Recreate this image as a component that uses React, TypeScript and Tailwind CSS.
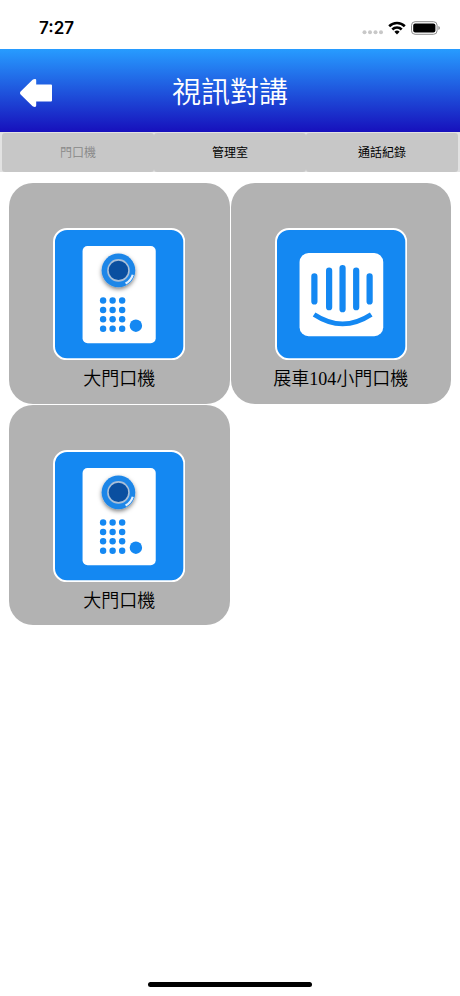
import { useState } from 'react'

const tabs = ['門口機', '管理室', '通話紀錄']

const stations = [
    { id: 1, name: '大門口機', kind: 'gate' },
    { id: 2, name: '展車104小門口機', kind: 'small' },
    { id: 3, name: '大門口機', kind: 'gate' },
]

function GateIcon() {
    return (
        <svg viewBox="0 0 132 132" className="w-full" aria-hidden="true">
            <defs>
                <filter id="lensShadow" x="-30%" y="-30%" width="160%" height="170%">
                    <feDropShadow dx="0" dy="2" stdDeviation="2" floodColor="#000" floodOpacity="0.5" />
                </filter>
            </defs>
            <rect x="1" y="1" width="130" height="130" rx="13" fill="#1488f2" stroke="#fff" strokeWidth="2" />
            <rect x="29.5" y="18" width="73" height="97" rx="5" fill="#fff" />
            <circle cx="65.3" cy="42.3" r="16.8" fill="#1d86e8" filter="url(#lensShadow)" />
            <circle cx="65.3" cy="42.3" r="10.5" fill="#0a4fa0" stroke="#a9bfd8" strokeWidth="1.6" />
            <path d="M79.6 46.6A15 15 0 0 1 72.4 55.4" fill="none" stroke="#e4f1ff" strokeWidth="2.2" />
            {[72.4, 81.8, 91.1, 100.5].map((y) =>
                [50, 59.5, 69].map((x) => <circle key={`${x}-${y}`} cx={x} cy={y} r="3.2" fill="#1488f2" />)
            )}
            <circle cx="82.7" cy="97.5" r="6.2" fill="#1488f2" />
        </svg>
    )
}

function SmallGateIcon() {
    return (
        <svg viewBox="0 0 132 132" className="w-full" aria-hidden="true">
            <rect x="1" y="1" width="130" height="130" rx="13" fill="#1488f2" stroke="#fff" strokeWidth="2" />
            <rect x="24.5" y="25" width="83.5" height="83" rx="9" fill="#fff" />
            <g fill="none" stroke="#1488f2" strokeWidth="6.2" strokeLinecap="round">
                <path d="M39.3 48.3V73.3M54 42.4V79M67.4 40V81M81 42.4V79M94.4 48.3V73.3" />
                <path d="M39 86.3Q67.4 105 96 86.3" strokeWidth="4.8" strokeLinecap="butt" />
            </g>
        </svg>
    )
}

function StatusBar() {
    return (
        <div className="flex h-[49px] items-center justify-between pt-[6px] pr-5 pl-[39px]">
            <span className="font-[Inter,sans-serif] text-[17px] leading-5 font-semibold">7:27</span>
            <div className="flex items-center gap-1">
                <svg viewBox="0 0 22 14" className="h-[14px] w-[22px]" fill="#c8c8c8" aria-hidden="true">
                    <circle cx="2.5" cy="11.3" r="2" />
                    <circle cx="8" cy="11.3" r="2" />
                    <circle cx="13.5" cy="11.3" r="2" />
                    <circle cx="19" cy="11.3" r="2" />
                </svg>
                <svg viewBox="0 0 18 14" className="h-[14px] w-[18px]" fill="none" stroke="#000" strokeWidth="2.6" aria-hidden="true">
                    <path d="M1.2 5.2a11.2 11.2 0 0 1 15.6 0" />
                    <path d="M4.3 8.5a6.7 6.7 0 0 1 9.4 0" />
                    <path d="M9 13.4 6.4 10.8a3.7 3.7 0 0 1 5.2 0z" fill="#000" stroke="none" />
                </svg>
                <svg viewBox="0 0 30 14" className="h-[14px] w-[30px]" aria-hidden="true">
                    <rect x="1.5" y=".7" width="25.6" height="12.6" rx="3.6" fill="none" stroke="#8c8c8c" />
                    <rect x="3.2" y="2.4" width="22.2" height="9.2" rx="2" fill="#000" />
                    <path d="M28.4 5v4q1.5-.7 1.5-2t-1.5-2z" fill="#8c8c8c" />
                </svg>
            </div>
        </div>
    )
}

export default function App() {
    const [active, setActive] = useState(0)

    return (
        <div className="flex min-h-screen flex-col bg-white font-['Liberation_Serif','Noto_Sans_CJK_TC',serif] text-black">
            <StatusBar />

            <header className="grid h-[83px] grid-cols-[1fr_auto_1fr] items-center bg-linear-to-b/srgb from-[#279cff] to-[#1710bc] px-5 pt-1">
                <button type="button" aria-label="返回" className="w-8">
                    <svg viewBox="0 0 32 28" className="h-7 w-8" fill="#fff" aria-hidden="true">
                        <path d="M.6 12.6 12.6.8Q13.6 0 15 0T16.2 1.4V5.6H31Q32 5.6 32 6.6V21.6Q32 22.6 31 22.6H16.2V26.6Q16.2 28 15 28T12.6 27.2L.6 15.4Q-.6 14 .6 12.6Z" />
                    </svg>
                </button>
                <h1 className="text-[29px] leading-9 font-[350] text-white">視訊對講</h1>
            </header>

            <nav className="grid grid-cols-3 bg-[#e2e2e2] px-[2px] pt-px">
                {tabs.map((tab, i) => (
                    <button
                        key={tab}
                        type="button"
                        onClick={() => setActive(i)}
                        className={`h-[39px] rounded-[3px] bg-[#c7c7c7] pt-px text-[12px] leading-4 ${i === active ? 'font-[350] text-[#888]' : ''}`}
                    >
                        {tab}
                    </button>
                ))}
            </nav>

            <main className="grid grid-cols-2 gap-px px-[9px] pt-[11px]">
                {stations.map((station) => (
                    <button
                        key={station.id}
                        type="button"
                        className="flex aspect-square flex-col items-center rounded-3xl bg-[#b2b2b2] pt-[45px]"
                    >
                        <span className="block w-3/5">
                            {station.kind === 'gate' ? <GateIcon /> : <SmallGateIcon />}
                        </span>
                        <span className="mt-[5px] text-[18px] leading-7 font-[350]">{station.name}</span>
                    </button>
                ))}
            </main>

            <div className="mt-auto flex justify-center pb-[9px]">
                <div className="h-[5px] w-[164px] rounded-full bg-black" />
            </div>
        </div>
    )
}
